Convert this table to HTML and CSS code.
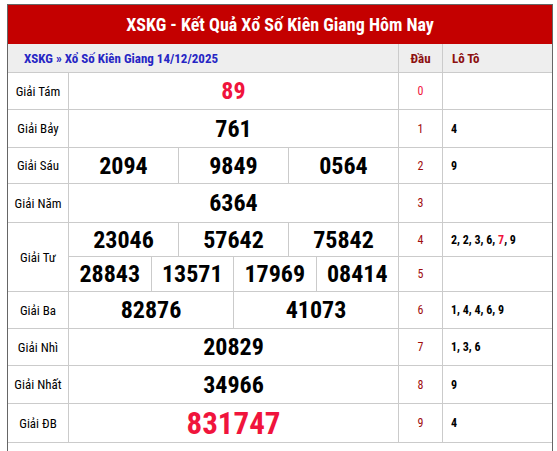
FILE: index.html
```html
<!DOCTYPE html>
<html lang="vi">
<head>
<meta charset="utf-8">
<title>XSKG - Kết Quả Xổ Số Kiên Giang Hôm Nay</title>
<link rel="stylesheet" href="styles.css">
</head>
<body>
<div class="box">
  <h1 class="title">XSKG - Kết Quả Xổ Số Kiên Giang Hôm Nay</h1>
  <div class="grid">
    <div class="sub span2">XSKG » Xổ Số Kiên Giang 14/12/2025</div>
    <div class="sub head-c">Đầu</div>
    <div class="sub head-l">Lô Tô</div>

    <div class="lbl">Giải Tám</div>
    <div class="nums"><span class="n red">89</span></div>
    <div class="dau red">0</div>
    <div class="loto"></div>

    <div class="lbl">Giải Bảy</div>
    <div class="nums"><span class="n">761</span></div>
    <div class="dau">1</div>
    <div class="loto">4</div>

    <div class="lbl">Giải Sáu</div>
    <div class="nums"><span class="n">2094</span><span class="n">9849</span><span class="n">0564</span></div>
    <div class="dau">2</div>
    <div class="loto">9</div>

    <div class="lbl">Giải Năm</div>
    <div class="nums"><span class="n">6364</span></div>
    <div class="dau">3</div>
    <div class="loto"></div>

    <div class="lbl rows2">Giải Tư</div>
    <div class="nums"><span class="n">23046</span><span class="n">57642</span><span class="n">75842</span></div>
    <div class="dau">4</div>
    <div class="loto">2, 2, 3, 6, <span class="red">7</span>, 9</div>

    <div class="nums"><span class="n">28843</span><span class="n">13571</span><span class="n">17969</span><span class="n">08414</span></div>
    <div class="dau">5</div>
    <div class="loto"></div>

    <div class="lbl">Giải Ba</div>
    <div class="nums"><span class="n">82876</span><span class="n">41073</span></div>
    <div class="dau">6</div>
    <div class="loto">1, 4, 4, 6, 9</div>

    <div class="lbl">Giải Nhì</div>
    <div class="nums"><span class="n">20829</span></div>
    <div class="dau">7</div>
    <div class="loto">1, 3, 6</div>

    <div class="lbl">Giải Nhất</div>
    <div class="nums"><span class="n">34966</span></div>
    <div class="dau">8</div>
    <div class="loto">9</div>

    <div class="lbl">Giải ĐB</div>
    <div class="nums"><span class="n big red">831747</span></div>
    <div class="dau">9</div>
    <div class="loto">4</div>
  </div>
</div>
</body>
</html>
```

FILE: styles.css
```css
* { box-sizing: border-box; }
html, body { margin: 0; padding: 0; background: #fff; }
body {
  font-family: Roboto, "Liberation Sans", sans-serif;
  font-stretch: 87.5%;
  color: #000;
}
.box {
  width: 546px;
  margin: 4px 0 0 7px;
  border: 1px solid #666;
  padding-bottom: 12px;
  background: #fff;
}
.title {
  margin: 0;
  height: 39px;
  line-height: 39px;
  background: #c40000;
  color: #fff;
  font-size: 18px;
  font-weight: 700;
  text-align: center;
}
.grid {
  display: grid;
  grid-template-columns: 60px 329px 43px 109px;
  grid-template-rows: 28px 36px 37px 35px 38px 33px 34px 36px 36px 37px 38px;
  gap: 1px;
  background: #cbcbcb;
  border-bottom: 1px solid #cbcbcb;
}
.grid > div { background: #fff; display: flex; align-items: center; }
.grid > .sub { background: #eee; font-size: 13px; font-weight: 700; }
.span2 { grid-column: span 2; padding-left: 16px; color: #2626c4; }
.head-c { justify-content: center; color: #8c1010; }
.head-l { padding-left: 9px; color: #8c1010; }
.lbl { justify-content: center; font-size: 13px; }
.rows2 { grid-row: span 2; }
.grid > .nums { gap: 1px; background: #cbcbcb; align-items: stretch; }
.n {
  flex: 1;
  background: #fff;
  display: flex;
  align-items: center;
  justify-content: center;
  font-size: 24px;
  font-weight: 700;
}
.n.big { font-size: 31px; }
.dau { justify-content: center; font-size: 12px; color: #a00d0d; }
.loto { padding-left: 8px; font-size: 12px; font-weight: 700; white-space: pre; }
.red { color: #f0143c; }
.grid > .dau.red { color: #f0143c; }
```
